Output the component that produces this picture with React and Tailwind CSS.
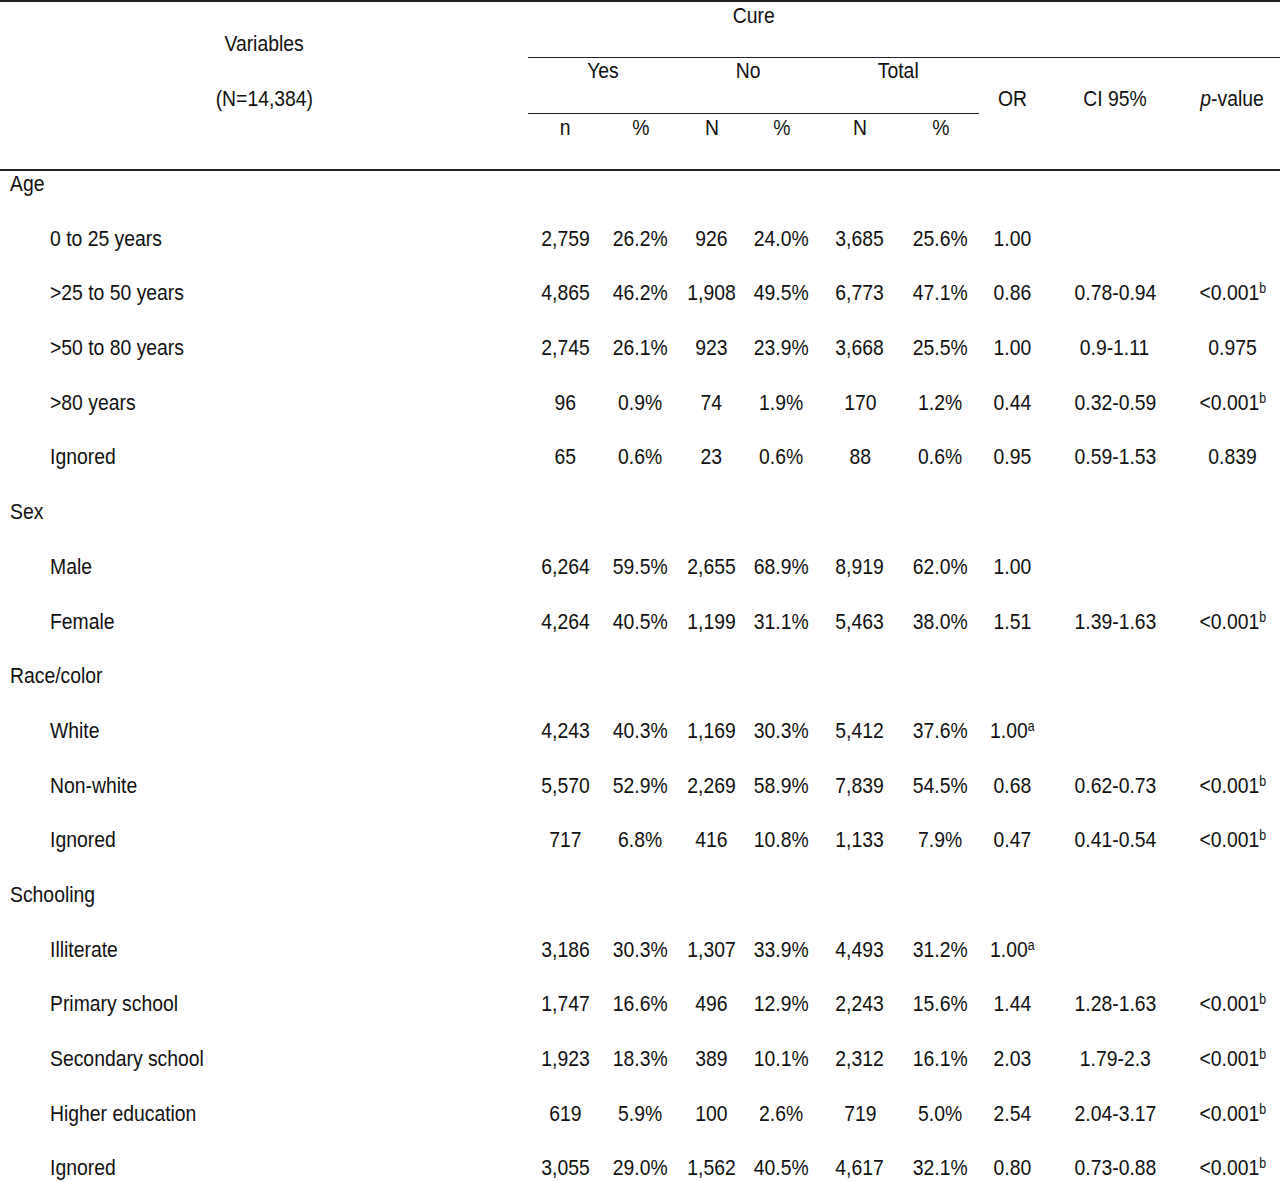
import React from "react";

const cols = "grid grid-cols-[528px_75px_75px_67px_73px_84px_77px_66px_140px_95px]";

const B = "b";
const A = "a";

const groups = [
  {
    title: "Age",
    rows: [
      ["0 to 25 years", "2,759", "26.2%", "926", "24.0%", "3,685", "25.6%", ["1.00"], "", null],
      [">25 to 50 years", "4,865", "46.2%", "1,908", "49.5%", "6,773", "47.1%", ["0.86"], "0.78-0.94", ["<0.001", B]],
      [">50 to 80 years", "2,745", "26.1%", "923", "23.9%", "3,668", "25.5%", ["1.00"], "0.9-1.11", ["0.975"]],
      [">80 years", "96", "0.9%", "74", "1.9%", "170", "1.2%", ["0.44"], "0.32-0.59", ["<0.001", B]],
      ["Ignored", "65", "0.6%", "23", "0.6%", "88", "0.6%", ["0.95"], "0.59-1.53", ["0.839"]],
    ],
  },
  {
    title: "Sex",
    rows: [
      ["Male", "6,264", "59.5%", "2,655", "68.9%", "8,919", "62.0%", ["1.00"], "", null],
      ["Female", "4,264", "40.5%", "1,199", "31.1%", "5,463", "38.0%", ["1.51"], "1.39-1.63", ["<0.001", B]],
    ],
  },
  {
    title: "Race/color",
    rows: [
      ["White", "4,243", "40.3%", "1,169", "30.3%", "5,412", "37.6%", ["1.00", A], "", null],
      ["Non-white", "5,570", "52.9%", "2,269", "58.9%", "7,839", "54.5%", ["0.68"], "0.62-0.73", ["<0.001", B]],
      ["Ignored", "717", "6.8%", "416", "10.8%", "1,133", "7.9%", ["0.47"], "0.41-0.54", ["<0.001", B]],
    ],
  },
  {
    title: "Schooling",
    rows: [
      ["Illiterate", "3,186", "30.3%", "1,307", "33.9%", "4,493", "31.2%", ["1.00", A], "", null],
      ["Primary school", "1,747", "16.6%", "496", "12.9%", "2,243", "15.6%", ["1.44"], "1.28-1.63", ["<0.001", B]],
      ["Secondary school", "1,923", "18.3%", "389", "10.1%", "2,312", "16.1%", ["2.03"], "1.79-2.3", ["<0.001", B]],
      ["Higher education", "619", "5.9%", "100", "2.6%", "719", "5.0%", ["2.54"], "2.04-3.17", ["<0.001", B]],
      ["Ignored", "3,055", "29.0%", "1,562", "40.5%", "4,617", "32.1%", ["0.80"], "0.73-0.88", ["<0.001", B]],
    ],
  },
];

function N({ children, left }) {
  return (
    <span className={`inline-block whitespace-nowrap scale-x-[0.88] ${left ? "origin-left" : "origin-center"}`}>
      {children}
    </span>
  );
}

function Sup({ v }) {
  if (!v) return null;
  return (
    <N>
      {v[0]}
      {v[1] ? <sup className="text-[14px] top-[-0.5em]">{v[1]}</sup> : null}
    </N>
  );
}

function DataRow({ r }) {
  return (
    <div className={`${cols} h-[54.7px] pt-[2px] leading-[22px]`}>
      <div className="pl-[50px]"><N left>{r[0]}</N></div>
      {r.slice(1, 7).map((c, i) => (
        <div key={i} className="text-center"><N>{c}</N></div>
      ))}
      <div className="text-center"><Sup v={r[7]} /></div>
      <div className="text-center">{r[8] ? <N>{r[8]}</N> : null}</div>
      <div className="text-center"><Sup v={r[9]} /></div>
    </div>
  );
}

function GroupRow({ title }) {
  return (
    <div className="h-[54.7px] pt-[2px] pl-[10px] leading-[22px]"><N left>{title}</N></div>
  );
}

export default function App() {
  return (
    <div
      className="w-[1280px] h-[1182px] overflow-hidden bg-white text-[#111] text-[22px] leading-[22px]"
      style={{ fontFamily: '"Liberation Sans", Arial, sans-serif' }}
    >
      {/* Header */}
      <div className={`${cols} grid-rows-[56px_56px_55px] border-t-2 border-b-2 border-[#222]`}>
        <div className="row-span-3 flex flex-col items-center">
          <div className="pt-[31px]"><N>Variables</N></div>
          <div className="pt-[33px]"><N>(N=14,384)</N></div>
        </div>
        <div className="col-span-6 text-center pt-[3px] border-b-[1.5px] border-[#222]"><N>Cure</N></div>
        <div className="col-span-3 border-b-[1.5px] border-[#222]"></div>
        <div className="col-span-2 text-center pt-[2px] border-b-[1.5px] border-[#222]"><N>Yes</N></div>
        <div className="col-span-2 text-center pt-[2px] border-b-[1.5px] border-[#222]"><N>No</N></div>
        <div className="col-span-2 text-center pt-[2px] border-b-[1.5px] border-[#222]"><N>Total</N></div>
        <div className="row-span-2 text-center pt-[30px]"><N>OR</N></div>
        <div className="row-span-2 text-center pt-[30px]"><N>CI 95%</N></div>
        <div className="row-span-2 text-center pt-[30px]">
          <N><span className="italic">p</span>-value</N>
        </div>
        <div className="text-center pt-[3px]"><N>n</N></div>
        <div className="text-center pt-[3px]"><N>%</N></div>
        <div className="text-center pt-[3px]"><N>N</N></div>
        <div className="text-center pt-[3px]"><N>%</N></div>
        <div className="text-center pt-[3px]"><N>N</N></div>
        <div className="text-center pt-[3px]"><N>%</N></div>
      </div>
      {/* Body */}
      {groups.map((g) => (
        <React.Fragment key={g.title}>
          <GroupRow title={g.title} />
          {g.rows.map((r, i) => (
            <DataRow key={i} r={r} />
          ))}
        </React.Fragment>
      ))}
    </div>
  );
}
